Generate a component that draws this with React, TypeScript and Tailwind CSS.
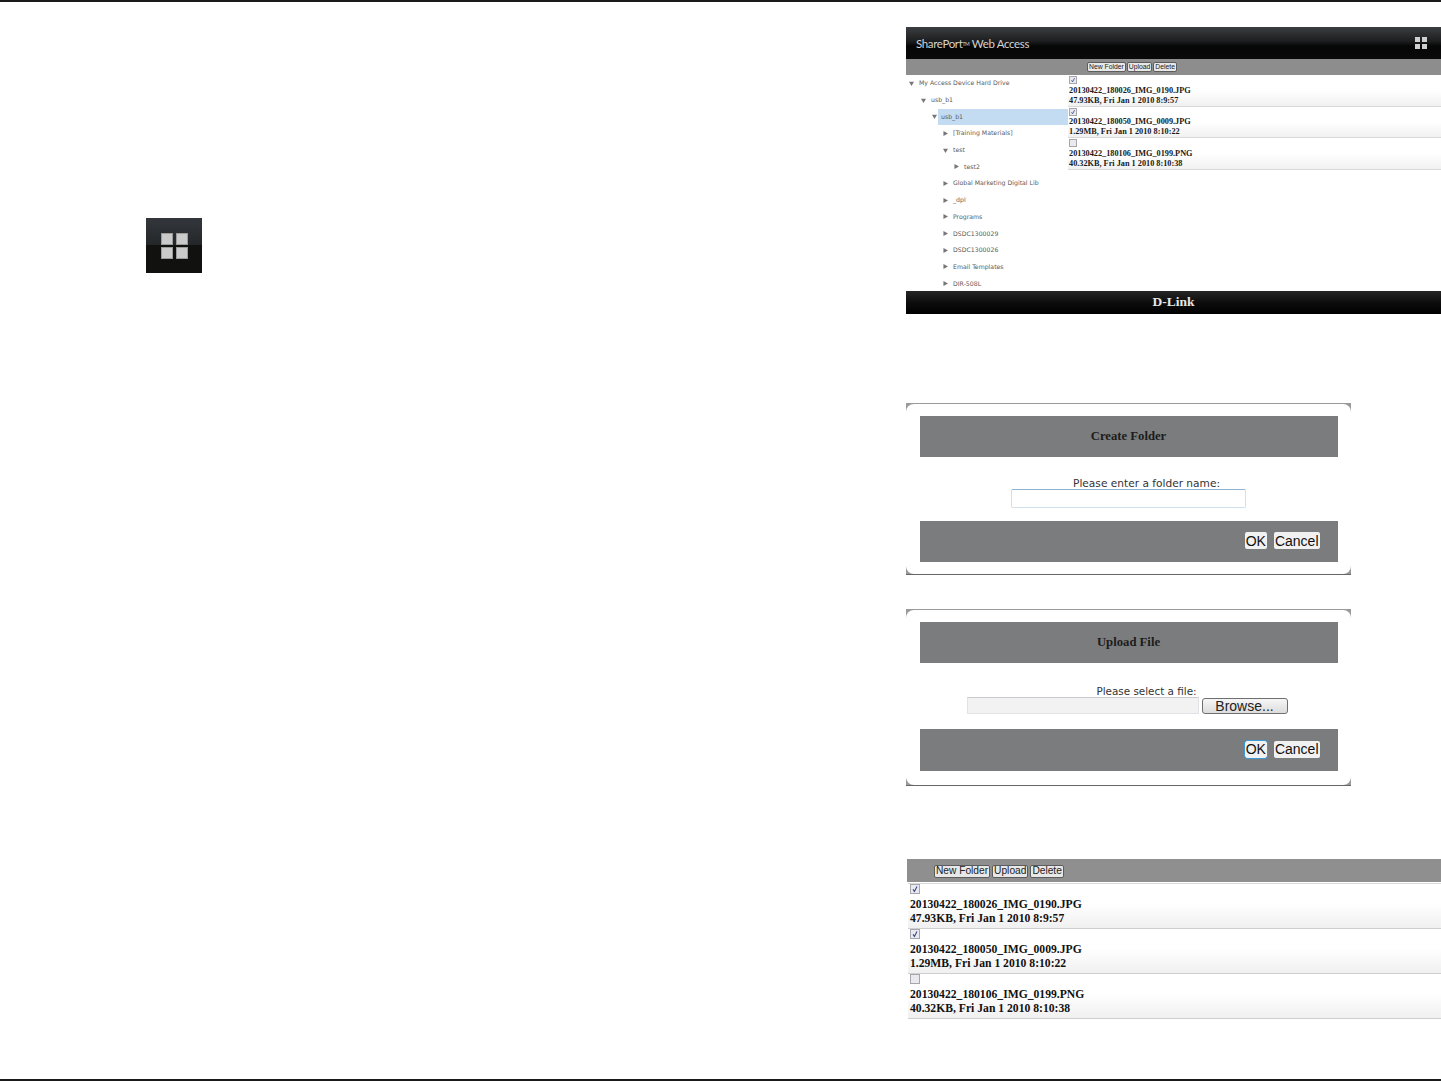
const serif = "font-['Liberation_Serif',serif]";
const arial = "font-['Liberation_Sans',sans-serif]";
const deja = "font-['DejaVu_Sans',sans-serif]";

type Node = { label: string; depth: number; open?: boolean; sel?: boolean };
const tree: Node[] = [
  { label: "My Access Device Hard Drive", depth: 0, open: true },
  { label: "usb_b1", depth: 1, open: true },
  { label: "usb_b1", depth: 2, open: true, sel: true },
  { label: "[Training Materials]", depth: 3 },
  { label: "test", depth: 3, open: true },
  { label: "test2", depth: 4 },
  { label: "Global Marketing Digital Lib", depth: 3 },
  { label: "_dpl", depth: 3 },
  { label: "Programs", depth: 3 },
  { label: "DSDC1300029", depth: 3 },
  { label: "DSDC1300026", depth: 3 },
  { label: "Email Templates", depth: 3 },
  { label: "DIR-508L", depth: 3 },
];

const files = [
  { name: "20130422_180026_IMG_0190.JPG", meta: "47.93KB, Fri Jan 1 2010 8:9:57", checked: true },
  { name: "20130422_180050_IMG_0009.JPG", meta: "1.29MB, Fri Jan 1 2010 8:10:22", checked: true },
  { name: "20130422_180106_IMG_0199.PNG", meta: "40.32KB, Fri Jan 1 2010 8:10:38", checked: false },
];

function Box({ checked, size }: { checked: boolean; size: "s" | "l" }) {
  return (
    <div
      className={
        (size === "l" ? "w-[10px] h-[10px]" : "w-[8px] h-[8px]") +
        " border border-[#a6a6ac] bg-[#e9e9ee] flex items-center justify-center shrink-0"
      }
    >
      {checked && (
        <svg viewBox="0 0 10 10" className="w-full h-full">
          <path d="M2.5 5.5 L4.3 8 L7.5 2" fill="none" stroke="#34498f" strokeWidth="1.4" />
        </svg>
      )}
    </div>
  );
}

function Arrow({ open }: { open?: boolean }) {
  return (
    <svg viewBox="0 0 6 6" className="w-[5px] h-[5px] shrink-0">
      {open ? <path d="M0 1 H6 L3 6 Z" fill="#777" /> : <path d="M0.5 0 L6 3 L0.5 6 Z" fill="#777" />}
    </svg>
  );
}

function GridIcon({ cell, gap, color }: { cell: string; gap: string; color: string }) {
  return (
    <div className={"grid grid-cols-2 " + gap}>
      {[0, 1, 2, 3].map((i) => (
        <div key={i} className={cell + " " + color} />
      ))}
    </div>
  );
}

function SmallBtn({ label, cls }: { label: string; cls: string }) {
  return (
    <span className={"bg-[#e8e8e8] border border-[#5c5c5c] rounded-[2px] leading-none text-[#222] flex items-center " + arial + " " + cls}>
      {label}
    </span>
  );
}

function DialogBtn({ label, focus }: { label: string; focus?: boolean }) {
  return (
    <span
      className={
        "h-[17px] px-[1px] bg-[#f1f1f1] rounded-[2px] flex items-center text-[14px] leading-none text-[#111] " +
        arial +
        (focus ? " outline outline-[1.5px] outline-[#3d9ad6]" : "")
      }
    >
      {label}
    </span>
  );
}

function Bar({ cls, children }: { cls: string; children?: React.ReactNode }) {
  return <div className={"bg-[#7b7c7e] flex " + cls}>{children}</div>;
}

function Dialog({
  title,
  height,
  bodyCls,
  children,
  focus,
  footH,
  titleCls,
}: {
  title: string;
  height: string;
  bodyCls: string;
  children: React.ReactNode;
  focus?: boolean;
  footH: string;
  titleCls: string;
}) {
  return (
    <div className={"w-[445px] bg-[#9a9a9a] pt-[1px] border-b border-[#666666] " + height}>
      <div className="h-full bg-white rounded-[8px] px-[13.5px] pt-[12px] flex flex-col">
        <Bar cls="h-[41px] items-center justify-center">
          <span className={"text-[12.7px] font-bold text-[#1c1c1c] " + serif + " " + titleCls}>{title}</span>
        </Bar>
        <div className={"flex flex-col items-center " + bodyCls}>{children}</div>
        <Bar cls={footH + " items-center justify-end gap-[7px] pr-[18px] pb-[2px]"}>
          <DialogBtn label="OK" focus={focus} />
          <DialogBtn label="Cancel" />
        </Bar>
      </div>
    </div>
  );
}

export default function App() {
  return (
    <div className="w-[1441px] h-[1081px] bg-white flex flex-col overflow-hidden">
      <div className="h-[2px] bg-[#1a1a1a] shrink-0" />
      <div className="flex-1 flex">
        {/* Left column */}
        <div className="w-[906px] shrink-0 pl-[146px] pt-[216px]">
          <div className="w-[56px] h-[55px] bg-[linear-gradient(#33373b_0%,#24272a_48%,#111110_50%,#111110_100%)] flex items-center justify-center">
            <GridIcon cell="w-[12px] h-[12px] border border-[#9a9a9a]" gap="gap-x-[3px] gap-y-[2px]" color="bg-[#cacaca]" />
          </div>
        </div>

        {/* Right column */}
        <div className="flex-1 flex flex-col pt-[25px]">
          {/* Screenshot 1 */}
          <div className="w-[535px] h-[287px] flex flex-col">
            <div className="h-[32px] bg-[linear-gradient(#3b3e41_0%,#1c1d1e_45%,#060606_60%,#0a0a0a_100%)] flex items-center justify-between pl-[10px] pr-[14px]">
              <span className="text-[11.5px] tracking-[-0.35px] text-[#d4d4d4] font-['Lato',sans-serif] mt-[2px]">
                SharePort<sup className="text-[5px]">TM</sup> Web Access
              </span>
              <GridIcon cell="w-[5px] h-[5px]" gap="gap-[2px]" color="bg-[#cfcfcf]" />
            </div>
            <div className="h-[16px] bg-[#8d8d8d] flex items-center gap-[1px] pl-[181px]">
              <SmallBtn label="New Folder" cls="h-[10px] px-[1px] text-[6.8px]" />
              <SmallBtn label="Upload" cls="h-[10px] px-[1px] text-[6.8px]" />
              <SmallBtn label="Delete" cls="h-[10px] px-[1px] text-[6.8px]" />
            </div>
            <div className="flex-1 flex overflow-hidden">
              <div className="w-[162px] shrink-0 flex flex-col">
                {tree.map((n, i) => {
                  const pad = ["pl-[3px]", "pl-[15px]", "pl-[26px]", "pl-[37px]", "pl-[48px]"][n.depth];
                  return (
                    <div key={i} className={"h-[16.7px] flex items-center gap-[4px] shrink-0 " + pad}>
                      <Arrow open={n.open} />
                      <span
                        className={
                          "text-[6.2px] leading-[16px] text-[#5a5a5a] whitespace-nowrap " +
                          deja +
                          (n.sel ? " bg-[#c3dcf2] -ml-[3px] pl-[3px] w-[130px] h-[16px]" : " ml-[1px]")
                        }
                      >
                        {n.label}
                      </span>
                    </div>
                  );
                })}
              </div>
              <div className="flex-1 flex flex-col">
                {files.map((f) => (
                  <div
                    key={f.name}
                    className="h-[31.6px] pl-[1px] pt-[1px] border-b border-[#d9d9d9] bg-[linear-gradient(#ffffff_0%,#ffffff_50%,#f1f1f1_100%)]"
                  >
                    <Box checked={f.checked} size="s" />
                    <div className={"text-[8.25px] leading-[10px] font-bold text-[#1a1a1a] whitespace-nowrap mt-[1.5px] " + serif}>
                      {f.name}
                    </div>
                    <div className={"text-[8.25px] leading-[10px] font-bold text-[#1a1a1a] whitespace-nowrap " + serif}>
                      {f.meta}
                    </div>
                  </div>
                ))}
              </div>
            </div>
            <div className="h-[23px] bg-[linear-gradient(#262626_0%,#0d0d0d_50%,#000000_100%)] flex items-center justify-center">
              <span className={"text-[13.5px] font-bold text-[#e6e6e6] " + serif}>D-Link</span>
            </div>
          </div>

          {/* Create folder */}
          <div className="mt-[89px]">
            <Dialog title="Create Folder" titleCls="" height="h-[172px]" bodyCls="h-[64px] pt-[21px]" footH="h-[41px]">
              <span className={"text-[10.6px] leading-[11px] text-[#333] ml-[36px] " + deja}>Please enter a folder name:</span>
              <div className="w-[235px] h-[19px] bg-white border border-[#cfe0ee] border-t-[#8fb2d2] rounded-[2px]" />
            </Dialog>
          </div>

          {/* Upload file */}
          <div className="mt-[34px]">
            <Dialog title="Upload File" titleCls="mt-[1px]" height="h-[177px]" focus bodyCls="h-[66px] pt-[22px]" footH="h-[42px]">
              <span className={"text-[10.4px] leading-[12px] text-[#333] ml-[36px] " + deja}>Please select a file:</span>
              <div className="flex items-center gap-[3px] mr-[3px]">
                <div className="w-[232px] h-[17px] bg-[#f2f2f2] border border-[#e2e2e6] border-t-[#c9c9cf]" />
                <span className={"w-[86px] h-[16px] bg-[linear-gradient(#f6f6f6,#dcdcdc)] border border-[#6f6f6f] rounded-[3px] flex items-center justify-center text-[14px] leading-none text-[#222] " + arial}>
                  Browse...
                </span>
              </div>
            </Dialog>
          </div>

          {/* Screenshot 3 */}
          <div className="mt-[73px] w-[534px] ml-[1px]">
            <div className="h-[23px] bg-[#8f8f8f] flex items-center gap-[2px] pl-[27px]">
              <SmallBtn label="New Folder" cls="h-[13px] mt-[1px] px-[1px] text-[10.2px]" />
              <SmallBtn label="Upload" cls="h-[13px] mt-[1px] px-[1px] text-[10.2px]" />
              <SmallBtn label="Delete" cls="h-[13px] mt-[1px] px-[1px] text-[10.2px]" />
            </div>
            <div className="mt-[1px] ml-[1px] flex flex-col border-t border-[#d8d8d8]">
              {files.map((f) => (
                <div
                  key={f.name}
                  className="h-[45px] pl-[2px] border-b border-[#cfcfcf] bg-[linear-gradient(#ffffff_0%,#ffffff_45%,#f0f0f0_100%)]"
                >
                  <Box checked={f.checked} size="l" />
                  <div className={"text-[11.65px] leading-[14px] font-bold text-[#111] whitespace-nowrap mt-[4px] " + serif}>
                    {f.name}
                  </div>
                  <div className={"text-[11.65px] leading-[14px] font-bold text-[#111] whitespace-nowrap " + serif}>
                    {f.meta}
                  </div>
                </div>
              ))}
            </div>
          </div>
        </div>
      </div>
      <div className="h-[2px] bg-[#1a1a1a] shrink-0" />
    </div>
  );
}
